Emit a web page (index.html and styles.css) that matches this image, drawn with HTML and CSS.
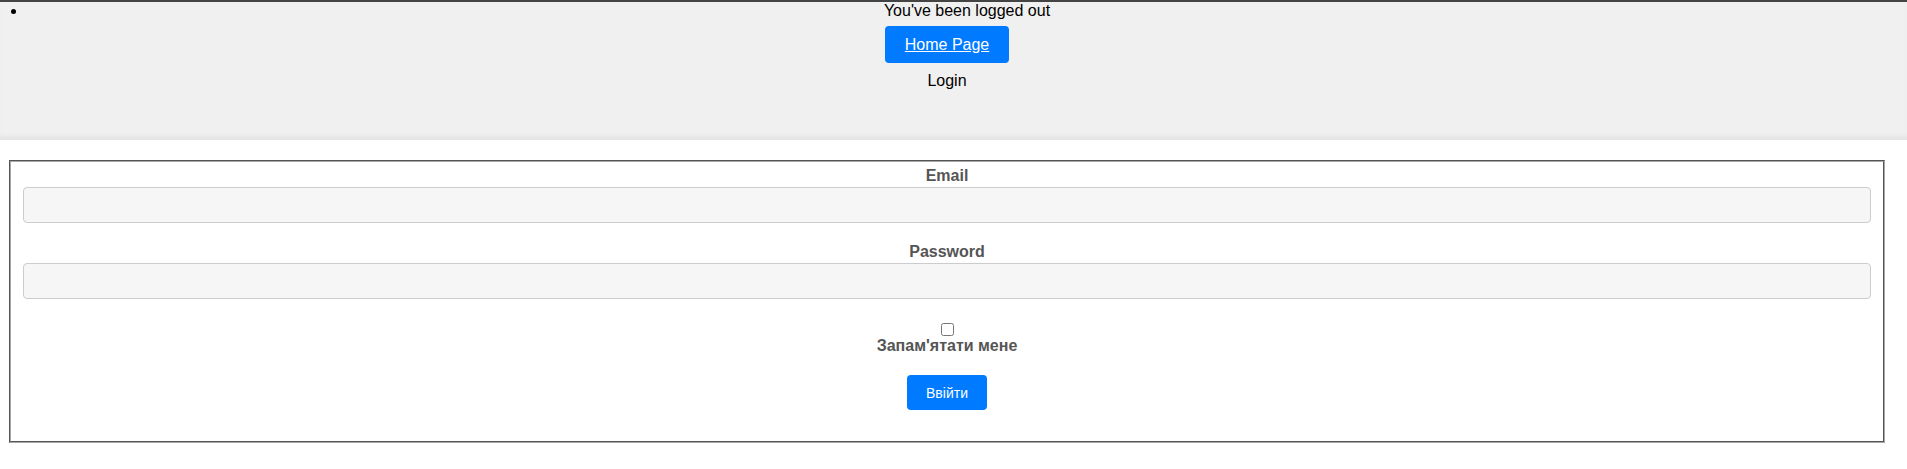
FILE: index.html
```html
<!DOCTYPE html>
<html lang="uk">
<head>
<meta charset="utf-8">
<title>Login</title>
<link rel="stylesheet" href="styles.css">
</head>
<body>
<header class="top">
  <ul class="messages">
    <li class="message">You've been logged out</li>
  </ul>
  <div class="top-actions">
    <a class="home-btn" href="#">Home Page</a>
    <div class="top-title">Login</div>
  </div>
</header>
<main class="panel">
  <form class="login-form">
    <div class="group group-first">
      <label class="field-label" for="email">Email</label>
      <input class="field" id="email" type="email">
    </div>
    <div class="group">
      <label class="field-label" for="password">Password</label>
      <input class="field" id="password" type="password">
    </div>
    <div class="group remember">
      <input class="check" id="remember" type="checkbox">
      <label class="field-label" for="remember">Запам'ятати мене</label>
    </div>
    <button class="submit" type="button">Ввійти</button>
  </form>
</main>
</body>
</html>
```
FILE: styles.css
```css
html, body {
  margin: 0;
  padding: 0;
  background: #ffffff;
  font-family: "Liberation Sans", Arial, sans-serif;
  font-size: 16px;
  color: #000;
}

.top {
  border-top: 2px solid #444444;
  background: #f0f0f0;
  height: 138px;
  box-shadow: inset 0 -6px 5px -3px #e2e2e2;
}

.messages {
  margin: 0;
  padding: 0 0 0 27px;
  list-style: disc;
}

.message {
  text-align: center;
  line-height: 18px;
}

.top-actions {
  margin-right: 13px;
  display: flex;
  flex-direction: column;
  align-items: center;
}

.home-btn {
  margin-top: 6px;
  display: block;
  width: 124px;
  box-sizing: border-box;
  text-align: center;
  padding: 9px 0;
  line-height: 19px;
  background: #007bff;
  color: #ffffff;
  text-decoration: underline;
  border-radius: 4px;
}

.top-title {
  margin-top: 9px;
  line-height: 18px;
}

.panel {
  background: #ffffff;
  border-top-right-radius: 5px;
  margin-top: 0;
  padding: 20px 22px 20px 9px;
}

.login-form {
  border: 2px groove #a8a8a8;
  padding: 5px 12px 31px;
  display: flex;
  flex-direction: column;
  align-items: center;
}

.group {
  width: 100%;
  display: flex;
  flex-direction: column;
  align-items: center;
  margin-bottom: 19px;
}

.group-first {
  margin-bottom: 20px;
}

.field-label {
  font-weight: bold;
  color: #555555;
  line-height: 18px;
}

.field {
  margin: 2px 0 0;
  width: 100%;
  box-sizing: border-box;
  height: 36px;
  background: #f6f6f6;
  border: 1px solid #cccccc;
  border-radius: 4px;
}

.remember {
  margin-top: 2px;
  margin-bottom: 20px;
}

.check {
  width: 13px;
  height: 13px;
  margin: 3px 3px 1px 4px;
}

.submit {
  width: 80px;
  height: 35px;
  background: #007bff;
  color: #ffffff;
  border: none;
  border-radius: 4px;
  font-family: "Liberation Sans", Arial, sans-serif;
  font-size: 14px;
  padding: 0;
}
```
